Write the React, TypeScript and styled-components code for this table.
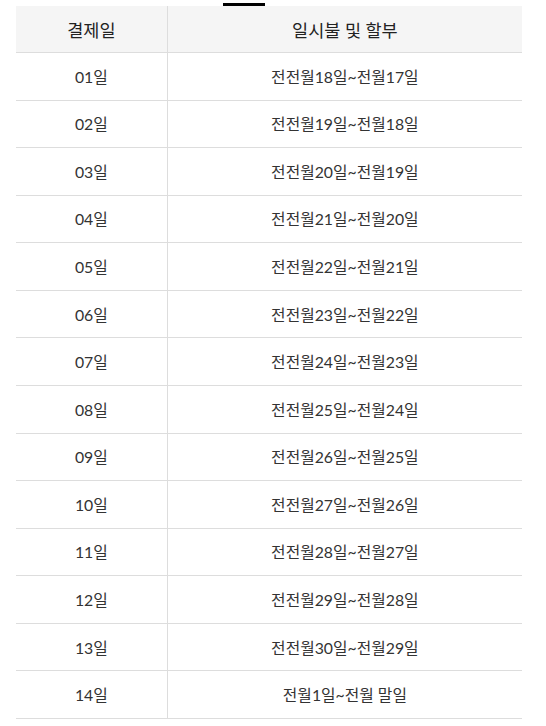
import React from 'react';
import styled, { createGlobalStyle } from 'styled-components';

const GlobalStyle = createGlobalStyle`
  html, body {
    margin: 0;
    padding: 0;
    background: #ffffff;
  }
  body {
    font-family: 'Lato', 'Noto Sans CJK KR', sans-serif;
  }
`;

const Page = styled.div`
  padding: 3px 24px 0 16px;
`;

const Indicator = styled.div`
  width: 42px;
  height: 3px;
  margin-left: 207px;
  background: #000000;
`;

const Table = styled.table`
  width: 100%;
  border-collapse: collapse;
  table-layout: fixed;
`;

const HeadCell = styled.th<{ $narrow?: boolean }>`
  width: ${p => (p.$narrow ? '29.8%' : 'auto')};
  height: 46px;
  padding: 0;
  background: #f5f5f5;
  border-bottom: 1px solid #dddddd;
  border-right: ${p => (p.$narrow ? '1px solid #dddddd' : 'none')};
  font-size: 17.5px;
  font-weight: 400;
  color: #222222;
  text-align: center;
`;

const Cell = styled.td<{ $narrow?: boolean }>`
  height: 46.57px;
  padding: 0;
  border-bottom: 1px solid #dddddd;
  border-right: ${p => (p.$narrow ? '1px solid #dddddd' : 'none')};
  font-size: 15.8px;
  color: #333333;
  text-align: center;
`;

const rows: [string, string][] = [
  ['01일', '전전월18일~전월17일'],
  ['02일', '전전월19일~전월18일'],
  ['03일', '전전월20일~전월19일'],
  ['04일', '전전월21일~전월20일'],
  ['05일', '전전월22일~전월21일'],
  ['06일', '전전월23일~전월22일'],
  ['07일', '전전월24일~전월23일'],
  ['08일', '전전월25일~전월24일'],
  ['09일', '전전월26일~전월25일'],
  ['10일', '전전월27일~전월26일'],
  ['11일', '전전월28일~전월27일'],
  ['12일', '전전월29일~전월28일'],
  ['13일', '전전월30일~전월29일'],
  ['14일', '전월1일~전월 말일'],
];

const App: React.FC = () => (
  <>
    <GlobalStyle />
    <Page>
      <Indicator />
      <Table>
        <thead>
          <tr>
            <HeadCell $narrow>결제일</HeadCell>
            <HeadCell>일시불 및 할부</HeadCell>
          </tr>
        </thead>
        <tbody>
          {rows.map(([day, period]) => (
            <tr key={day}>
              <Cell $narrow>{day}</Cell>
              <Cell>{period}</Cell>
            </tr>
          ))}
        </tbody>
      </Table>
    </Page>
  </>
);

export default App;
